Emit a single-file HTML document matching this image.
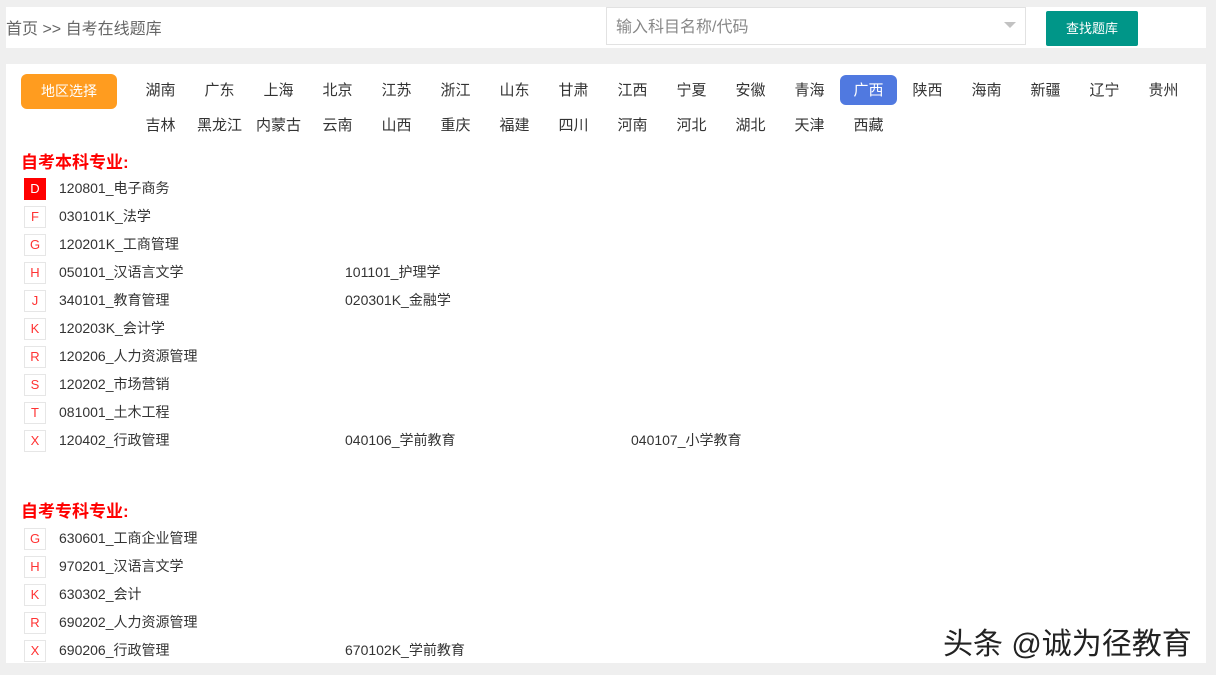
<!DOCTYPE html>
<html><head><meta charset="utf-8"><style>
body{margin:0;background:#efefef;width:1216px;height:675px;position:relative;overflow:hidden;font-family:"Liberation Sans","Noto Sans CJK SC",sans-serif;color:#333}
.a{position:absolute;white-space:nowrap}
.top{left:6px;top:7px;width:1200px;height:41px;background:#fff}
.panel{left:6px;top:64px;width:1200px;height:599px;background:#fff}
.reg{font-size:15px;width:59px;text-align:center;color:#333}
.box{width:20px;height:20px;border:1px solid #e6e6e6;color:#f33;font-size:13px;text-align:center;line-height:20px;left:24px}
.t{font-size:14px;color:#333}
.h{font-size:17px;font-weight:bold;color:#f00}
</style></head><body>
<div class="a top"></div>
<div class="a" style="left:6px;top:15px;font-size:16px;color:#666">首页 &gt;&gt; 自考在线题库</div>
<div class="a" style="left:606px;top:7px;width:418px;height:36px;border:1px solid #e2e2e2;background:#fff"></div>
<div class="a" style="left:616px;top:13px;font-size:16px;color:#888">输入科目名称/代码</div>
<div class="a" style="left:1004px;top:22px;width:0;height:0;border-left:6px solid transparent;border-right:6px solid transparent;border-top:6px solid #c2c2c2"></div>
<div class="a" style="left:1046px;top:11px;width:92px;height:35px;background:#009688;border-radius:2px;color:#fff;font-size:13px;text-align:center;line-height:35px">查找题库</div>
<div class="a panel"></div>
<div class="a" style="left:21px;top:74px;width:96px;height:35px;background:#ff9c1f;border-radius:6px;color:#fff;font-size:14px;text-align:center;line-height:35px">地区选择</div>
<div class="a" style="left:840px;top:75px;width:57px;height:30px;background:#5079e0;border-radius:6px"></div>
<div id="r"></div>
<div class="a h" style="left:21px;top:148px">自考本科专业:</div>
<div class="a h" style="left:21px;top:497px">自考专科专业:</div>
<script>
var r1="湖南 广东 上海 北京 江苏 浙江 山东 甘肃 江西 宁夏 安徽 青海 广西 陕西 海南 新疆 辽宁 贵州".split(" ");
var r2="吉林 黑龙江 内蒙古 云南 山西 重庆 福建 四川 河南 河北 湖北 天津 西藏".split(" ");
var h="";
r1.forEach(function(s,i){h+='<div class="a reg" style="left:'+(131+i*59)+'px;top:79px;'+(s=="广西"?'color:#fff':'')+'">'+s+'</div>'});
r2.forEach(function(s,i){h+='<div class="a reg" style="left:'+(131+i*59)+'px;top:114px">'+s+'</div>'});
function rows(y0,data){data.forEach(function(d,i){var y=y0+i*28;
h+='<div class="a box" style="top:'+(y-10)+'px;'+(d[0]=="D"?'background:#f00;color:#fff;border-color:#f00':'')+'">'+d[0]+'</div>';
for(var j=1;j<d.length;j++)h+='<div class="a t" style="left:'+(59+(j-1)*286)+'px;top:'+(y-10)+'px">'+d[j]+'</div>';});}
rows(188,[["D","120801_电子商务"],["F","030101K_法学"],["G","120201K_工商管理"],["H","050101_汉语言文学","101101_护理学"],["J","340101_教育管理","020301K_金融学"],["K","120203K_会计学"],["R","120206_人力资源管理"],["S","120202_市场营销"],["T","081001_土木工程"],["X","120402_行政管理","040106_学前教育","040107_小学教育"]]);
rows(538,[["G","630601_工商企业管理"],["H","970201_汉语言文学"],["K","630302_会计"],["R","690202_人力资源管理"],["X","690206_行政管理","670102K_学前教育"]]);
document.getElementById("r").innerHTML=h;
</script>
<div class="a" style="left:943px;top:619px;font-size:30px;color:#222;text-shadow:1px 1px 0 #fff,-1px -1px 0 #fff">头条 @诚为径教育</div>
</body></html>
